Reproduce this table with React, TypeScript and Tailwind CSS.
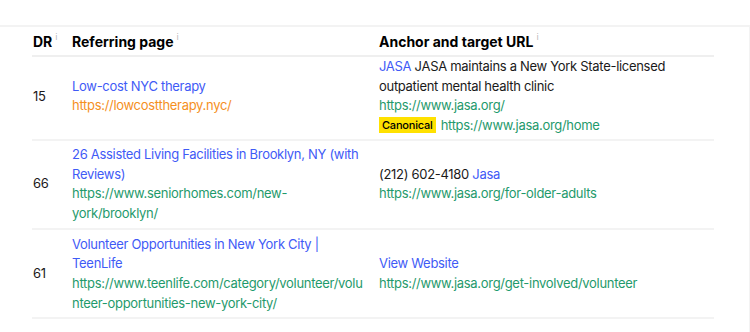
const Info = () => (
  <span className="ml-[3px] inline-block align-top pt-[2px] font-['DejaVu_Sans',sans-serif] text-[8px] font-normal leading-none text-[#b5b5b5]">i</span>
);

type Row = {
  dr: number;
  title: string;
  url: string;
  urlColor: string;
  cellPad: string;
  anchor: React.ReactNode;
};

const rows: Row[] = [
  {
    dr: 15,
    title: "Low-cost NYC therapy",
    url: "https://lowcosttherapy.nyc/",
    urlColor: "text-[#f5901e]",
    cellPad: "pt-0 pb-[3px]",
    anchor: (
      <>
        <p>
          <span className="text-[#3f5bf6]">JASA</span> JASA maintains a New York State-licensed outpatient mental health
          clinic
        </p>
        <p className="text-[#1f9a6c]">https://www.jasa.org/</p>
        <p className="text-[#1f9a6c]">
          <span className="mr-[5px] inline-block bg-[#ffe100] px-[3px] text-[11px] font-medium leading-[16px] tracking-[-0.2px] text-black align-[1px]">
            Canonical
          </span>
          https://www.jasa.org/home
        </p>
      </>
    ),
  },
  {
    dr: 66,
    title: "26 Assisted Living Facilities in Brooklyn, NY (with Reviews)",
    url: "https://www.seniorhomes.com/new-york/brooklyn/",
    urlColor: "text-[#1f9a6c]",
    cellPad: "py-[4px]",
    anchor: (
      <>
        <p>
          (212) 602-4180 <span className="text-[#3f5bf6]">Jasa</span>
        </p>
        <p className="text-[#1f9a6c]">https://www.jasa.org/for-older-adults</p>
      </>
    ),
  },
  {
    dr: 61,
    title: "Volunteer Opportunities in New York City | TeenLife",
    url: "https://www.teenlife.com/category/volunteer/volunteer-opportunities-new-york-city/",
    urlColor: "text-[#1f9a6c]",
    cellPad: "pt-[5px] pb-[4px]",
    anchor: (
      <>
        <p className="text-[#3f5bf6]">View Website</p>
        <p className="text-[#1f9a6c]">https://www.jasa.org/get-involved/volunteer</p>
      </>
    ),
  },
];

export default function App() {
  return (
    <div className="h-[332px] w-[750px] bg-white pt-[25px] font-['Inter',sans-serif] text-[13px] leading-[19.7px] tracking-[-0.3px] text-[#1a1a1a]">
      <div className="h-[307px] border-t-2 border-r border-[#f3f3f3] pl-[32px] pr-[35px]">
        <table className="w-full table-fixed border-collapse">
          <thead>
            <tr className="border-b-2 border-[#efefef]">
              <th className="h-[29px] w-[40px] pl-[1px] pt-[1px] text-left text-[14px] font-bold tracking-normal text-black">
                DR
                <Info />
              </th>
              <th className="w-[307px] pt-[1px] text-left text-[14px] font-bold tracking-normal text-black">
                Referring page
                <Info />
              </th>
              <th className="pt-[1px] text-left text-[14px] font-bold tracking-normal text-black">
                Anchor and target URL
                <Info />
              </th>
            </tr>
          </thead>
          <tbody>
            {rows.map((r) => (
              <tr key={r.dr} className="border-b-2 border-[#f3f3f3]">
                <td className={`pl-[1px] align-middle ${r.cellPad}`}>{r.dr}</td>
                <td className={`pr-[10px] align-middle ${r.cellPad}`}>
                  <p className="text-[#3f5bf6]">{r.title}</p>
                  <p className={`[overflow-wrap:anywhere] ${r.urlColor}`}>{r.url}</p>
                </td>
                <td className={`align-middle ${r.cellPad}`}>{r.anchor}</td>
              </tr>
            ))}
          </tbody>
        </table>
      </div>
    </div>
  );
}
